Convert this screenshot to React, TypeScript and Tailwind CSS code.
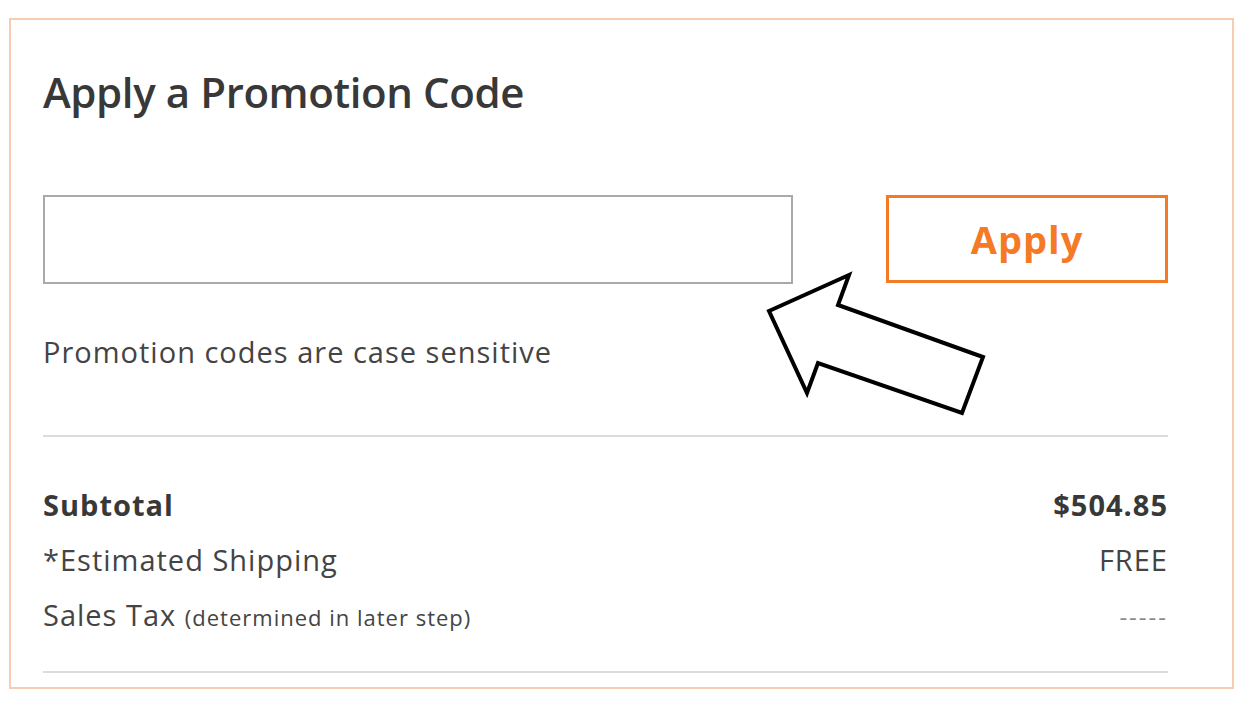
import React from "react";

const font = { fontFamily: '"Open Sans", "Liberation Sans", sans-serif' };

const Arrow = () => (
  <svg
    className="absolute left-[760px] top-[265px]"
    width="232"
    height="158"
    viewBox="0 0 232 158"
  >
    <polygon
      points="9,46 89,10 78,40 223,92 202,148 58,98 47,128"
      fill="white"
      stroke="black"
      strokeWidth="4"
      strokeLinejoin="miter"
    />
  </svg>
);

const App = () => {
  return (
    <div className="relative w-[1246px] h-[708px] bg-white overflow-hidden" style={font}>
      <div className="ml-[9px] mt-[18px] w-[1225px] h-[671px] border-2 border-[#f6cdb1] pl-[32px] pr-[64px] pt-[51px]">
        <h2 className="text-[42px] leading-[42px] font-semibold text-[#383838] tracking-[-0.4px]">
          Apply a Promotion Code
        </h2>

        <div className="mt-[82px] flex justify-between">
          <input
            className="w-[750px] h-[89px] border-2 border-[#a9a9a9] outline-none"
            type="text"
          />
          <button className="w-[282px] h-[88px] border-[3px] border-[#f47a26] text-[#f47a26] text-[38px] font-bold tracking-[1px] flex items-center justify-center">
            Apply
          </button>
        </div>

        <p className="mt-[54px] text-[29px] leading-[28px] tracking-[1px] text-[#444]">
          Promotion codes are case sensitive
        </p>

        <div className="mt-[69px] h-[2px] bg-[#dcdcdc]" />

        <div className="mt-[40px] text-[29px] leading-[55px] tracking-[1px] text-[#444]">
          <div className="flex justify-between font-bold text-[#383838]">
            <span>Subtotal</span>
            <span>$504.85</span>
          </div>
          <div className="flex justify-between">
            <span>*Estimated Shipping</span>
            <span>FREE</span>
          </div>
          <div className="flex justify-between items-baseline">
            <span>
              Sales Tax <span className="text-[22px]">(determined in later step)</span>
            </span>
            <span className="text-[24px] tracking-[2px] text-[#8a8a8a]">-----</span>
          </div>
        </div>

        <div className="mt-[26px] h-[2px] bg-[#dcdcdc]" />
      </div>
      <Arrow />
    </div>
  );
};

export default App;
